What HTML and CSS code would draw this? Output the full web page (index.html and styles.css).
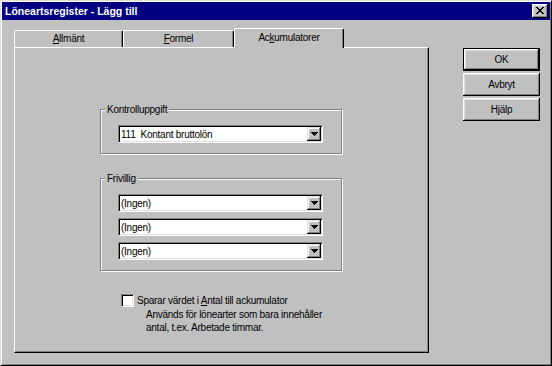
FILE: index.html
```html
<!DOCTYPE html>
<html lang="sv">
<head>
	<meta charset="UTF-8">
	<title>Löneartsregister - Lägg till</title>
	<link rel="stylesheet" href="styles.css">
</head>
<body>
	<div class="window">
		<div class="titlebar">
			<span class="title">Löneartsregister - Lägg till</span>
			<span class="close">
				<svg width="16" height="14" viewBox="0 0 16 14"><path d="M4 3h2v1H4zM10 3h2v1h-2zM5 4h2v1H5zM9 4h2v1H9zM6 5h4v1H6zM7 6h2v1H7zM6 7h4v1H6zM5 8h2v1H5zM9 8h2v1H9zM4 9h2v1H4zM10 9h2v1h-2z" fill="#000"/></svg>
			</span>
		</div>
		<div class="content">
			<div class="tabbox">
				<div class="tabs">
					<div class="tab tab-general"><u>A</u>llmänt</div>
					<div class="tab tab-formula"><u>F</u>ormel</div>
					<div class="tab tab-acc active">Ac<u>k</u>umulatorer</div>
				</div>
				<div class="panel">
					<fieldset class="group">
						<legend>Kontrolluppgift</legend>
						<div class="combo">
							<span class="combo-value">111  Kontant bruttolön</span>
							<span class="combo-btn"><svg width="7" height="4" viewBox="0 0 7 4"><path d="M0 0h7v1H0zM1 1h5v1H1zM2 2h3v1H2zM3 3h1v1H3z" fill="#000"/></svg></span>
						</div>
					</fieldset>
					<fieldset class="group group-optional">
						<legend>Frivillig</legend>
						<div class="combo">
							<span class="combo-value">(Ingen)</span>
							<span class="combo-btn"><svg width="7" height="4" viewBox="0 0 7 4"><path d="M0 0h7v1H0zM1 1h5v1H1zM2 2h3v1H2zM3 3h1v1H3z" fill="#000"/></svg></span>
						</div>
						<div class="combo">
							<span class="combo-value">(Ingen)</span>
							<span class="combo-btn"><svg width="7" height="4" viewBox="0 0 7 4"><path d="M0 0h7v1H0zM1 1h5v1H1zM2 2h3v1H2zM3 3h1v1H3z" fill="#000"/></svg></span>
						</div>
						<div class="combo">
							<span class="combo-value">(Ingen)</span>
							<span class="combo-btn"><svg width="7" height="4" viewBox="0 0 7 4"><path d="M0 0h7v1H0zM1 1h5v1H1zM2 2h3v1H2zM3 3h1v1H3z" fill="#000"/></svg></span>
						</div>
					</fieldset>
					<div class="option">
						<div class="check-row">
							<span class="checkbox"></span>
							<span>Sparar värdet i <u>A</u>ntal till ackumulator</span>
						</div>
						<p class="hint">Används för lönearter som bara innehåller<br>antal, t.ex. Arbetade timmar.</p>
					</div>
				</div>
			</div>
			<div class="actions">
				<button class="btn btn-default">OK</button>
				<button class="btn">Avbryt</button>
				<button class="btn">Hjälp</button>
			</div>
		</div>
	</div>
</body>
</html>
```

FILE: styles.css
```css
* {
	box-sizing: border-box;
}

html, body {
	margin: 0;
}

body {
	background: #c0c0c0;
	color: #000;
	font: 10px/13px "Liberation Sans", Arial, sans-serif;
	letter-spacing: -0.25px;
}

u {
	text-underline-offset: 1px;
}

.window {
	width: 552px;
	height: 366px;
	padding: 1px;
	border: 1px solid;
	border-color: #dfdfdf #000 #000 #dfdfdf;
	box-shadow: inset 1px 1px #fff, inset -1px -1px #808080;
	background: #c0c0c0;
}

.titlebar {
	height: 18px;
	padding: 0 2px 0 3px;
	display: flex;
	align-items: center;
	justify-content: space-between;
	background: #000080;
}

.title {
	color: #fff;
	font-weight: bold;
	font-size: 10.5px;
	letter-spacing: 0;
}

.close {
	width: 16px;
	height: 14px;
	display: block;
	background: #c0c0c0;
	box-shadow: inset -1px -1px #000, inset 1px 1px #fff, inset -2px -2px #808080, inset 2px 2px #dfdfdf;
}

.close svg {
	display: block;
}

.content {
	display: flex;
	padding: 8px 0 0 12px;
}

.tabbox {
	width: 415px;
}

.tabs {
	height: 19px;
	display: flex;
	align-items: flex-end;
}

.tab {
	height: 17px;
	border: 1px solid #fff;
	border-bottom: 0;
	border-right-color: #000;
	border-radius: 2px 2px 0 0;
	box-shadow: inset -1px 0 #808080;
	text-align: center;
	line-height: 15px;
	background: #c0c0c0;
}

.tab-general {
	width: 109px;
}

.tab-formula {
	width: 111px;
}

.tab-acc {
	width: 110px;
}

.tab.active {
	height: 20px;
	margin-bottom: -1px;
	position: relative;
	z-index: 1;
	line-height: 17px;
}

.panel {
	height: 306px;
	padding: 55px 0 0 85px;
	border: 1px solid;
	border-color: #fff #000 #000 #fff;
	box-shadow: inset -1px -1px #808080;
}

.group {
	width: 242px;
	margin: 0;
	padding: 9px 17px 10px;
	border: 1px solid #808080;
	box-shadow: 1px 1px #fff, inset 1px 1px #fff;
}

.group legend {
	margin-left: -13px;
	padding: 0 2px;
	background: #c0c0c0;
	line-height: 13px;
}

.group-optional {
	margin-top: 18px;
	display: flex;
	flex-direction: column;
	gap: 6px;
}

.combo {
	width: 205px;
	height: 18px;
	padding: 1px;
	display: flex;
	align-items: center;
	border: 1px solid;
	border-color: #808080 #fff #fff #808080;
	box-shadow: inset 1px 1px #000, inset -1px -1px #dfdfdf;
	background: #fff;
}

.combo-value {
	flex: 1;
	padding-left: 1px;
	white-space: pre;
}

.combo-btn {
	width: 14px;
	height: 14px;
	display: flex;
	align-items: center;
	justify-content: center;
	background: #c0c0c0;
	box-shadow: inset -1px -1px #000, inset 1px 1px #dfdfdf, inset -2px -2px #808080, inset 2px 2px #fff;
}

.combo-btn svg {
	display: block;
}

.option {
	margin: 23px 0 0 21px;
}

.check-row {
	display: flex;
	align-items: center;
	gap: 3px;
}

.checkbox {
	width: 13px;
	height: 13px;
	border: 1px solid;
	border-color: #808080 #fff #fff #808080;
	box-shadow: inset 1px 1px #000, inset -1px -1px #dfdfdf;
	background: #fff;
}

.hint {
	margin: 1px 0 0 25px;
}

.actions {
	margin: 20px 0 0 34px;
	display: flex;
	flex-direction: column;
	gap: 2px;
}

.btn {
	width: 77px;
	height: 23px;
	padding: 0;
	border: 0;
	font: inherit;
	letter-spacing: inherit;
	color: #000;
	background: #c0c0c0;
	box-shadow: inset -1px -1px #000, inset 1px 1px #fff, inset -2px -2px #808080, inset 2px 2px #dfdfdf;
}

.btn-default {
	border: 1px solid #000;
}
```
